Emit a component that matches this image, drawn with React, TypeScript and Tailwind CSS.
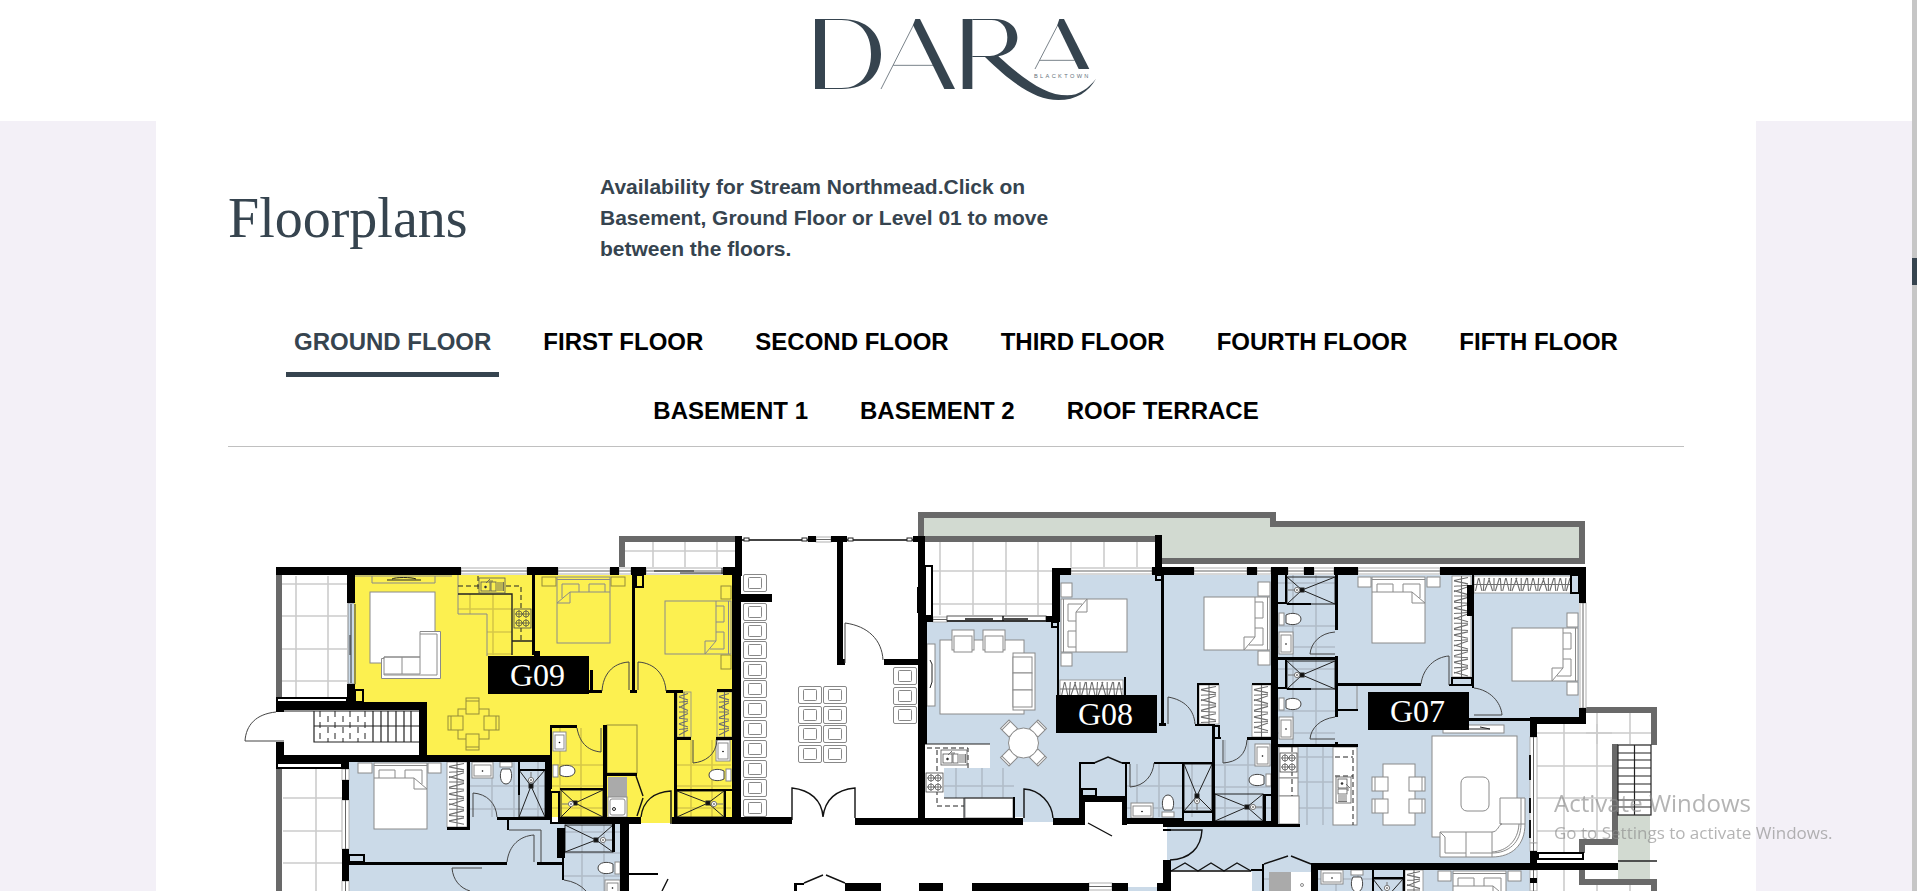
import React, { useState } from "react";

type Box = [x: number, y: number, w: number, h: number];

const FLOORS = [
  "GROUND FLOOR",
  "FIRST FLOOR",
  "SECOND FLOOR",
  "THIRD FLOOR",
  "FOURTH FLOOR",
  "FIFTH FLOOR",
  "BASEMENT 1",
  "BASEMENT 2",
  "ROOF TERRACE",
];

const LINE = "#8a8a8a";
const INK = "#222222";
const YELLOW = "#fcf050";
const BLUE = "#cbdae8";
const GREY = "#696969";
const GREEN = "#d2dad1";

/* ---------- Logo ---------- */

function Logo() {
  return (
    <svg viewBox="96 45 864 264" className="block w-72" role="img" aria-label="Dara Blacktown">
      <g fill="#36444f">
        <rect x="105" y="57" width="30" height="210" />
        <path d="M135 57H185C260 57 303 100 303 162C303 225 260 267 185 267H135V264H185C240 264 273 225 273 162C273 97 238 60 185 60H135Z" />
        <path d="M406 57H420L525 267H493L399 75Z" />
        <rect x="548" y="57" width="29" height="210" />
        <path d="M577 57H640C685 57 712 80 712 112C712 143 690 162 655 169C740 245 800 286 862 286C897 286 926 264 948 236C926 276 888 300 835 300C768 300 700 254 615 171H577V168H630C664 166 682 145 682 112C682 78 660 60 635 60H577Z" />
        <path d="M838 57H852L928 207H896L832 75Z" />
      </g>
      <g stroke="#36444f" strokeWidth="2" fill="none">
        <path d="M401 74L303 267M340 196H462M834 74L765 207M779 181H884" />
      </g>
      <text x="762" y="233" fontSize="17" fill="#64707a" className="font-['Liberation_Sans'] tracking-[7px]">
        BLACKTOWN
      </text>
    </svg>
  );
}

/* ---------- Floor plan symbols ---------- */

function Rects({ boxes, fill, stroke, weight }: { boxes: Box[]; fill: string; stroke?: string; weight?: number }) {
  return (
    <g fill={fill} stroke={stroke} strokeWidth={weight}>
      {boxes.map(([x, y, w, h]) => (
        <rect key={`${x}-${y}-${w}`} x={x} y={y} width={w} height={h} />
      ))}
    </g>
  );
}

/** Grid of paving joints clipped to a box. */
function Tiles({ box: [x, y, w, h], xs, ys, color = "#cccccc" }: { box: Box; xs: number[]; ys: number[]; color?: string }) {
  return (
    <path
      d={xs.map((v) => `M${v} ${y}v${h}`).join("") + ys.map((v) => `M${x} ${v}h${w}`).join("")}
      stroke={color}
      strokeWidth="1.6"
      fill="none"
    />
  );
}

/** Bed drawn 53 wide by 66 long with the pillows at the top, then turned about its corner. */
function Bed({ x, y, turn = 0, flip = false, fill = "#ffffff" }: { x: number; y: number; turn?: number; flip?: boolean; fill?: string }) {
  return (
    <g transform={`translate(${x} ${y}) rotate(${turn}) ${flip ? "translate(53 0) scale(-1 1)" : ""}`} fill={fill} stroke={LINE}>
      <rect width="53" height="66" />
      <path d="M0 2.500H53M0 15H40L53 26M40 15V26H53M5 15V7H21V15M31 15V7H48V21" fill="none" />
    </g>
  );
}

/** Hanging rail with coat hangers. */
function Wardrobe({ box: [x, y, w, h], fill = "#ffffff" }: { box: Box; fill?: string }) {
  const tall = h > w;
  const len = tall ? h : w;
  const deep = tall ? w : h;
  const tilt = [1.5, -1.5, 0.5, 2.5, -2, 0, 2, -0.5];
  let d = "";
  for (let i = 3, k = 0; i < len - 2; i += 3.4, k++) {
    const t = tilt[k % 8];
    const a = Math.min(len - 1, Math.max(1, i + t));
    const b = Math.min(len - 1, Math.max(1, i - t));
    d += tall ? `M${x + 2} ${y + a}L${x + deep - 3} ${y + b}` : `M${x + a} ${y + 2}L${x + b} ${y + deep - 2}`;
  }
  d += tall ? `M${x + deep / 2} ${y}v${len}` : `M${x} ${y + deep / 2}h${len}`;
  return (
    <g>
      <rect x={x} y={y} width={w} height={h} fill={fill} stroke={LINE} strokeWidth="0.800" />
      <path d={d} stroke="#6f6f6f" strokeWidth="1.100" fill="none" />
    </g>
  );
}

function Shower({ box: [x, y, w, h], hx, hy }: { box: Box; hx: number; hy: number }) {
  return (
    <g stroke={INK} fill="none">
      <rect x={x} y={y} width={w} height={h} />
      <path d={`M${x} ${y}L${hx} ${hy}L${x + w} ${y}M${x} ${y + h}L${hx} ${hy}L${x + w} ${y + h}`} />
      <rect x={hx - 2} y={hy - 2} width="4" height="4" fill="#111111" />
    </g>
  );
}

function Nozzle({ x, y, dx = 0, dy = 0 }: { x: number; y: number; dx?: number; dy?: number }) {
  return (
    <g stroke="#777777" fill="#ffffff">
      <path d={`M${x} ${y}l${dx} ${dy}`} />
      <circle cx={x} cy={y} r="2.600" />
      <circle cx={x} cy={y} r="0.500" fill="#000000" />
    </g>
  );
}

/** Toilet: cistern at the origin, pan pointing right before turning. */
function Toilet({ x, y, turn = 0 }: { x: number; y: number; turn?: number }) {
  return (
    <g transform={`translate(${x} ${y}) rotate(${turn})`} stroke="#888888" fill="#ffffff">
      <rect x="0" y="-6" width="5" height="12" />
      <path d="M7 -4C12 -7 22 -6 22 0C22 6 12 7 7 4Z" stroke="#444444" />
    </g>
  );
}

function Basin({ box: [x, y, w, h] }: { box: Box }) {
  return (
    <g stroke={LINE} fill="#ffffff">
      <rect x={x} y={y} width={w} height={h} />
      <rect x={x + 2} y={y + 3} width={w - 4} height={h - 5} />
      <circle cx={x + w / 2} cy={y + h / 2 + 1} r="0.800" fill="#000000" stroke="none" />
    </g>
  );
}

function Hob({ x, y, fill = "#ffffff" }: { x: number; y: number; fill?: string }) {
  return (
    <g stroke="#444444" fill={fill}>
      <rect x={x} y={y} width="17" height="19" strokeWidth="0.800" />
      {[5, 12].map((cx) =>
        [5, 14].map((cy) => (
          <g key={`${cx}-${cy}`} strokeWidth="0.700">
            <circle cx={x + cx} cy={y + cy} r="3" />
            <path d={`M${x + cx - 4} ${y + cy}h8M${x + cx} ${y + cy - 4}v8`} />
          </g>
        )),
      )}
    </g>
  );
}

function Sink({ x, y, turn = 0, fill = "#ffffff" }: { x: number; y: number; turn?: number; fill?: string }) {
  return (
    <g transform={`translate(${x} ${y}) rotate(${turn})`} stroke="#555555" strokeWidth="0.800" fill={fill}>
      <rect width="26" height="15" />
      <rect x="2" y="4" width="9" height="9" />
      <rect x="12" y="4" width="5" height="9" />
      <path d="M19 4V13M21 4V13M23 4V13M24.500 4V13M7 5L11 1M10 3H14" />
      <circle cx="6.500" cy="9" r="1" fill="#000000" />
    </g>
  );
}

function LobbySeat({ x, y }: { x: number; y: number }) {
  return (
    <g transform="translate(0.500 0.500)" stroke="#888888" fill="#ffffff">
      <rect x={x} y={y} width="23" height="17" rx="1.500" />
      <rect x={x + 5} y={y + 3} width="13" height="11" rx="1" />
    </g>
  );
}

/** Glazing between two wall ends. */
function Windows({ boxes }: { boxes: Box[] }) {
  return (
    <g>
      {boxes.map(([x, y, w, h]) => (
        <g key={`${x}-${y}`} stroke="#666666" fill="#ffffff">
          <rect x={x} y={y} width={w} height={h} stroke="#b0b0b0" />
          <path d={w > h ? `M${x} ${y + h / 2}h${w}` : `M${x + w / 2} ${y}v${h}`} />
        </g>
      ))}
    </g>
  );
}

function UnitLabel({ x, y, w = 101, name }: { x: number; y: number; w?: number; name: string }) {
  return (
    <a href={`#${name}`}>
      <rect x={x} y={y} width={w} height="38" fill="#000000" />
      <text x={x + w / 2 - 1} y={y + 30} textAnchor="middle" fontSize="32" fill="#ffffff" className="font-['Liberation_Serif',serif]">
        {name}
      </text>
    </a>
  );
}

/* ---------- Floor plan data ---------- */

const GLAZING: Box[] = [
  [461, 568, 66, 6], [558, 568, 52, 6], [619, 568, 12, 6], [646, 568, 77, 6],
  [342, 769, 7, 11], [342, 800, 7, 49], [342, 881, 7, 12],
  [1071, 568, 81, 6], [1194, 568, 53, 6], [1257, 568, 14, 6], [1288, 568, 16, 6],
  [1314, 568, 20, 6], [1358, 568, 82, 6], [1580, 603, 6, 105], [933, 617, 14, 5],
  [1530, 737, 7, 106], [1530, 843, 7, 8], [1530, 870, 7, 21], [816, 537, 15, 5], [1089, 883, 23, 7],
];

const WALLS: Box[] = [
  // G09 perimeter
  [276, 567, 185, 8], [527, 567, 31, 8], [610, 567, 9, 8], [631, 567, 15, 8], [723, 567, 18, 8],
  [347, 567, 8, 36], [347, 684, 8, 20], [276, 702, 151, 8], [419, 702, 8, 60], [276, 755, 275, 7],
  [276, 702, 8, 10], [276, 742, 8, 20], [735, 536, 7, 40], [732, 567, 9, 257],
  // G09 partitions
  [532, 575, 3, 80], [534, 651, 6, 6], [632, 575, 3, 117], [590, 670, 3, 22], [580, 690, 22, 3],
  [630, 690, 7, 3], [666, 690, 17, 3], [674, 690, 3, 128], [717, 689, 15, 3], [676, 737, 15, 3],
  [716, 737, 16, 3], [550, 725, 27, 3], [550, 725, 2, 64], [603, 725, 4, 93], [607, 773, 30, 3],
  [560, 788, 44, 2], [677, 789, 55, 2], [724, 790, 2, 28], [560, 817, 81, 7], [672, 817, 120, 7],
  // South-west unit
  [545, 762, 6, 58], [467, 762, 3, 68], [447, 827, 22, 3], [497, 817, 53, 3], [507, 817, 2, 13],
  [349, 862, 158, 3], [537, 862, 26, 3], [342, 762, 7, 7], [342, 780, 7, 20], [342, 849, 7, 32],
  [557, 828, 8, 30], [562, 850, 2, 30], [612, 824, 3, 28], [620, 817, 9, 74], [518, 762, 2, 33],
  [520, 769, 26, 2], [629, 873, 29, 2],
  // Lobby
  [808, 536, 8, 6], [831, 536, 16, 6], [837, 536, 6, 129], [837, 659, 8, 6], [741, 594, 31, 8],
  [913, 536, 6, 6], [884, 659, 34, 6], [918, 536, 7, 288], [917, 587, 9, 26], [918, 617, 9, 127],
  [855, 818, 168, 7], [845, 883, 36, 8], [919, 883, 24, 8], [972, 883, 117, 8], [1112, 883, 16, 8],
  [794, 883, 3, 8], [794, 883, 10, 2],
  // G08
  [1052, 568, 8, 54], [1052, 568, 19, 7], [925, 616, 8, 6], [1046, 616, 12, 6],
  [1057, 622, 2, 73], [1124, 677, 2, 19], [1155, 535, 7, 40], [1152, 567, 42, 8], [1247, 567, 10, 8],
  [1161, 575, 3, 150], [1159, 723, 7, 3], [1197, 683, 2, 42], [1197, 683, 22, 2], [1252, 683, 19, 2],
  [1195, 724, 18, 2], [1212, 724, 3, 100], [1213, 737, 8, 2], [1247, 737, 24, 3], [1154, 762, 59, 2],
  [1182, 764, 2, 60], [1184, 811, 30, 2], [1263, 794, 3, 28], [1263, 794, 8, 2], [1271, 567, 7, 258],
  [1079, 762, 2, 60], [1079, 762, 16, 2], [1122, 762, 8, 2], [1125, 764, 2, 60], [1080, 796, 46, 6],
  [1079, 797, 6, 28], [1122, 797, 5, 28], [1053, 818, 32, 7], [1122, 818, 62, 6], [1163, 821, 115, 6],
  [1013, 797, 2, 22],
  // G07
  [1278, 567, 10, 8], [1304, 567, 10, 8], [1334, 567, 24, 8], [1440, 567, 146, 8], [1579, 567, 7, 36],
  [1579, 708, 7, 16], [1530, 717, 56, 7], [1530, 717, 7, 20], [1285, 575, 2, 28], [1335, 575, 3, 55],
  [1278, 602, 9, 2], [1287, 603, 24, 2], [1278, 657, 59, 3], [1335, 656, 3, 61], [1285, 660, 2, 28],
  [1278, 687, 9, 2], [1287, 688, 24, 2], [1335, 742, 3, 4], [1278, 744, 80, 3], [1338, 709, 20, 2],
  [1338, 683, 83, 3], [1449, 684, 24, 2], [1472, 575, 2, 113], [1467, 585, 7, 31], [1469, 718, 61, 3],
  [1278, 824, 22, 3], [1311, 863, 307, 7], [1530, 851, 7, 19], [1530, 878, 7, 5],
  [1163, 829, 8, 2], [1163, 860, 8, 31], [1157, 883, 7, 8], [1311, 863, 7, 28], [1262, 864, 2, 27],
  [1372, 870, 2, 21], [1403, 870, 2, 21], [1374, 877, 30, 2], [1251, 869, 12, 2],
];

const OUTLINED: Box[] = [
  [277, 698, 70, 4], [277, 763, 65, 5], [355, 690, 8, 12], [349, 855, 15, 7], [636, 575, 7, 12],
  [551, 792, 8, 31], [925, 566, 7, 50], [1052, 622, 6, 5], [1156, 575, 6, 5], [1214, 726, 5, 12],
  [1082, 789, 14, 7], [1452, 678, 20, 7], [1571, 575, 8, 18], [1538, 853, 45, 6],
];

const SEAT_ROWS = [574, 603, 622, 641, 661, 680, 700, 720, 740, 760, 779, 799];

/* ---------- Floor plan ---------- */

function FloorPlan() {
  return (
    <svg viewBox="228 495 1456 396" className="block w-full" role="img" aria-label="Ground floor plan">
      {/* Room and garden fills */}
      <path d="M355 575H732V817H672V823H641V817H551V755H427V702H355Z" fill={YELLOW} />
      <path d="M349 762H550V824H620V891H349Z" fill={BLUE} />
      <path d="M927 622H1057V575H1271V822H1053V822H1023V817H927Z" fill={BLUE} />
      <path d="M1278 575H1579V717H1530V891H1252V872H1171V860H1167V826H1278Z" fill={BLUE} />
      <rect x="1127" y="887" width="36" height="4" fill={BLUE} />
      <path d="M924 518H1271V527H1579V559H1162V536H924Z" fill={GREEN} />
      <rect x="1618" y="815" width="32" height="64" fill={GREEN} />

      {/* Paving */}
      <Tiles box={[282, 576, 65, 121]} xs={[296, 328]} ys={[584, 616, 649, 681]} />
      <Tiles box={[283, 768, 59, 123]} xs={[316]} ys={[798, 831, 863]} />
      <Tiles box={[625, 542, 110, 25]} xs={[653, 685, 717]} ys={[551]} />
      <Tiles box={[932, 542, 120, 73]} xs={[940, 973, 1006, 1038]} ys={[571, 604]} />
      <Tiles box={[1060, 542, 95, 25]} xs={[1071, 1104, 1137]} ys={[]} />
      <Tiles box={[1537, 724, 75, 128]} xs={[1564, 1597]} ys={[733, 766, 798, 831]} />
      <Tiles box={[1586, 713, 65, 31]} xs={[1597, 1630]} ys={[733]} />
      <Tiles box={[1537, 870, 42, 21]} xs={[1564]} ys={[]} />
      <Tiles box={[1579, 885, 72, 6]} xs={[1597, 1630]} ys={[]} />
      <rect x="1585" y="845" width="33" height="18" fill="#ffffff" />

      {/* Wet-area and kitchen floors */}
      <g>
        <Tiles box={[552, 728, 51, 89]} xs={[560, 581]} ys={[765, 786, 808]} color="#d6c848" />
        <Tiles box={[677, 740, 54, 77]} xs={[691, 712]} ys={[765, 786, 808]} color="#d6c848" />
        <Tiles box={[458, 594, 54, 20]} xs={[470, 493]} ys={[609]} color="#d6c848" />
        <Tiles box={[487, 614, 25, 41]} xs={[493]} ys={[632, 654]} color="#d6c848" />
        <Tiles box={[470, 762, 75, 55]} xs={[492, 514, 538]} ys={[786, 809]} color="#b1bcc8" />
        <Tiles box={[564, 825, 56, 66]} xs={[582, 604]} ys={[832, 853, 876]} color="#b1bcc8" />
        <Tiles box={[944, 768, 70, 30]} xs={[956, 982, 1003]} ys={[786]} color="#b1bcc8" />
        <Tiles box={[1127, 764, 85, 53]} xs={[1137, 1159, 1192]} ys={[786, 808]} color="#b1bcc8" />
        <Tiles box={[1215, 740, 56, 81]} xs={[1225, 1248]} ys={[765, 787, 808]} color="#b1bcc8" />
        <Tiles box={[1278, 575, 57, 169]} xs={[1293, 1316]} ys={[583, 626, 647, 669, 711, 733]} color="#b1bcc8" />
        <Tiles box={[1298, 747, 35, 78]} xs={[1307, 1323]} ys={[757, 782, 808]} color="#b1bcc8" />
        <Tiles box={[1264, 872, 140, 19]} xs={[1277, 1336, 1358]} ys={[879]} color="#b1bcc8" />
      </g>

      {/* Parapets */}
      <g fill="none" stroke={GREY} strokeWidth="6">
        <path d="M279 575V697M279 768V891M622 567V539H735" />
        <path d="M921 542V515H1273V524H1582V561H1162M924 539H1155" />
        <path d="M1586 710H1654V745M1615 744V842H1582V853M1582 867V882H1654V891" />
      </g>
      <path d="M1618 861H1657" stroke={INK} strokeWidth="1.400" />

      {/* G09 furniture */}
      <g fill={YELLOW} stroke={LINE}>
        <path d="M355 576H452M372 576V583H435V576M458 575V594M458 594V614H487V656" fill="none" />
        <path d="M387 580H421M392 579C395 577 412 577 416 579" fill="none" stroke={INK} />
        <rect x="370" y="592" width="65" height="71" fill="#ffffff" />
        <path d="M420 631.500H440.500V678.500H381.500V658.500H384V657H420Z" fill="#ffffff" />
        <path d="M384 657H420M420 634H437V675H384V657M402 657V674M420 657V674M384 674H420" fill="none" />
        <g stroke="#948c38">
          <rect x="458" y="709" width="31" height="30" />
          <rect x="466" y="698" width="13" height="16" />
          <rect x="466" y="734" width="13" height="16" />
          <rect x="448" y="716" width="15" height="14" />
          <rect x="484" y="716" width="15" height="14" />
          <path d="M466 701H479M466 747H479M451 716V730M496 716V730" />
          <rect x="542" y="577" width="14" height="9" />
          <rect x="611" y="577" width="14" height="9" />
          <rect x="721" y="586" width="10" height="13" />
          <rect x="721" y="655" width="10" height="14" />
          <rect x="607" y="725" width="30" height="48" />
        </g>
        <path d="M458 594H512V655M512 641H532" stroke={INK} strokeWidth="1.400" fill="none" />
        <path d="M458 586H521V640M478 576V592" stroke={INK} strokeDasharray="5 3" fill="none" />
      </g>
      <Sink x={479} y={578} fill={YELLOW} />
      <Hob x={514} y={609} fill={YELLOW} />
      <Bed x={557} y={577} flip fill={YELLOW} />
      <Bed x={731} y={601} turn={90} fill={YELLOW} />
      <Wardrobe box={[677, 692, 14, 45]} fill={YELLOW} />
      <Wardrobe box={[717, 692, 15, 45]} fill={YELLOW} />
      <Basin box={[553, 732, 13, 19]} />
      <Toilet x={553} y={771} />
      <Shower box={[561, 790, 42, 27]} hx={575} hy={803} />
      <Nozzle x={571} y={804} dx={-9} />
      <Basin box={[716, 740, 14, 21]} />
      <Toilet x={731} y={775} turn={180} />
      <Shower box={[677, 791, 47, 26]} hx={708} hy={803} />
      <Nozzle x={714} y={804} dx={9} />
      <rect x="608" y="777" width="19" height="20" fill="#aaaaaa" />
      <rect x="608" y="797" width="19" height="20" fill="#ffffff" stroke={LINE} />
      <rect x="610" y="799" width="15" height="16" rx="2" fill="none" stroke={LINE} />
      <circle cx="614" cy="809" r="1.500" fill="none" stroke={INK} />

      {/* Fire stair */}
      <g stroke={INK} fill="none" strokeWidth="1.200">
        <path d="M284 711H419M314 711V742H419M314 726H419M373 711V742M381 711V742M388 711V742M396 711V742M404 711V742M411 711V742" />
        <path d="M320 711V742M328 716V742M335 711V742M343 716V742M350 711V742M358 716V742M365 711V742" strokeDasharray="6 5" strokeWidth="1" />
      </g>

      {/* South-west unit furniture */}
      <Bed x={374} y={763} />
      <Rects fill="#ffffff" stroke={LINE} boxes={[[358, 763, 14, 10], [428, 763, 13, 10]]} />
      <Wardrobe box={[447, 762, 20, 65]} />
      <Basin box={[472, 762, 21, 16]} />
      <Toilet x={506} y={762} turn={90} />
      <Shower box={[519, 770, 26, 47]} hx={531} hy={786} />
      <Nozzle x={531} y={780} dy={-8} />
      <Shower box={[565, 825, 48, 27]} hx={596} hy={840} />
      <Nozzle x={603} y={840} dx={9} />
      <Toilet x={620} y={868} turn={180} />
      <Basin box={[605, 880, 15, 14]} />

      {/* Lobby seating */}
      {SEAT_ROWS.map((y) => (
        <LobbySeat key={y} x={743} y={y} />
      ))}
      {[686, 706, 725, 745].map((y) => (
        <g key={y}>
          <LobbySeat x={798} y={y} />
          <LobbySeat x={823} y={y} />
        </g>
      ))}
      {[667, 687, 706].map((y) => (
        <LobbySeat key={y} x={893} y={y} />
      ))}

      {/* G08 furniture */}
      <Rects
        fill="#ffffff"
        stroke={LINE}
        boxes={[
          [927, 644, 8, 62], [940, 640, 84, 74], [952, 630, 22, 20], [954, 636, 18, 16], [983, 630, 22, 20],
          [985, 636, 18, 16], [1013, 653, 22, 57], [1013, 657, 19, 16], [1013, 673, 19, 17], [1013, 690, 19, 17],
          [1061, 583, 11, 14], [1061, 653, 11, 13], [1258, 582, 12, 14], [1258, 651, 12, 14],
        ]}
      />
      <path d="M930 688L932 682V664L930 660" fill="none" stroke={INK} />
      <g fill="#ffffff" stroke={LINE}>
        {[45, 135, 225, 315].map((angle) => (
          <g key={angle} transform={`rotate(${angle} 1023.500 743)`}>
            <rect x="1038" y="737" width="12" height="12" />
            <path d="M1048 737V749" />
          </g>
        ))}
        <circle cx="1023.500" cy="743" r="15" />
      </g>
      <path d="M925 744H990V768H944V798H964V818H925Z" fill="#ffffff" />
      <rect x="965" y="798" width="48" height="20" fill="#ffffff" stroke={LINE} />
      <path d="M925 744H990M944 798H1014M964 798V818" stroke={INK} fill="none" />
      <path d="M927 748H968V768M937 750V806H964" stroke={INK} strokeDasharray="5 3" fill="none" />
      <Sink x={941} y={750} />
      <Hob x={926} y={773} />
      <Bed x={1061} y={652} turn={270} />
      <Bed x={1270} y={597} turn={90} />
      <Wardrobe box={[1060, 680, 63, 18]} />
      <Wardrobe box={[1199, 685, 20, 39]} />
      <Wardrobe box={[1252, 685, 19, 52]} />
      <rect x="1085" y="802" width="37" height="20" fill="#ffffff" />
      <Basin box={[1131, 803, 22, 15]} />
      <Toilet x={1168} y={817} turn={270} />
      <Shower box={[1184, 764, 28, 47]} hx={1197} hy={796} />
      <Nozzle x={1197} y={801} dy={9} />
      <Basin box={[1255, 744, 15, 22]} />
      <Toilet x={1271} y={780} turn={180} />
      <Shower box={[1215, 794, 48, 27]} hx={1247} hy={807} />
      <Nozzle x={1253} y={807} dx={9} />

      {/* G07 furniture */}
      <Shower box={[1287, 577, 48, 27]} hx={1302} hy={590} />
      <Nozzle x={1297} y={590} dx={-9} />
      <Toilet x={1279} y={619} />
      <Basin box={[1279, 632, 14, 22]} />
      <Shower box={[1287, 661, 48, 28]} hx={1302} hy={675} />
      <Nozzle x={1297} y={675} dx={-9} />
      <Toilet x={1279} y={704} />
      <Basin box={[1279, 717, 14, 22]} />
      <Bed x={1372} y={577} />
      <Bed x={1578} y={628} turn={90} />
      <Wardrobe box={[1452, 576, 19, 101]} />
      <Wardrobe box={[1474, 576, 97, 17]} />
      <Rects
        fill="#ffffff"
        stroke={LINE}
        boxes={[
          [1358, 577, 13, 10], [1427, 577, 13, 10], [1567, 613, 11, 14], [1567, 682, 11, 13],
          [1279, 747, 19, 31], [1279, 778, 19, 18], [1279, 796, 20, 28], [1333, 747, 24, 78],
          [1383, 764, 32, 61], [1443, 725, 61, 8], [1432, 736, 85, 101],
          [1372, 777, 16, 14], [1409, 777, 16, 14], [1372, 799, 16, 14], [1409, 799, 16, 14],
        ]}
      />
      <path d="M1375 777V791M1422 777V791M1375 799V813M1422 799V813M1338 685H1357V709" stroke={LINE} fill="none" />
      <path d="M1353 750V825M1335 757H1353M1335 776H1353M1292 747V796" stroke={INK} strokeDasharray="5 3" fill="none" />
      <Hob x={1280} y={753} />
      <Sink x={1351} y={777} turn={90} />
      <g fill="#ffffff" stroke={LINE}>
        <rect x="1461" y="777" width="28" height="34" rx="6" />
        <path d="M1440 832H1492C1498 832 1499 824 1502 824H1500V798H1525V824C1525 845 1512 857 1492 857H1440Z" />
        <path d="M1440 832L1445 837V853H1466M1466 832V857M1492 832V857M1470 853H1492C1508 853 1521 843 1521 824V798M1500 824H1525M1492 852C1507 851 1518 841 1519 824" fill="none" />
        <path d="M1458 729H1490L1480 727" fill="none" stroke={INK} />
      </g>

      {/* Lower units */}
      <rect x="1171" y="872" width="80" height="19" fill="#ffffff" />
      <rect x="1269" y="872" width="22" height="19" fill="#aaaaaa" />
      <rect x="1291" y="872" width="20" height="19" fill="#ffffff" />
      <circle cx="1302" cy="885" r="1.500" fill="none" stroke={LINE} />
      <Basin box={[1321, 870, 22, 14]} />
      <Toilet x={1357} y={870} turn={90} />
      <Shower box={[1373, 879, 30, 27]} hx={1387} hy={897} />
      <Nozzle x={1387} y={888} dy={-6} />
      <Wardrobe box={[1405, 870, 18, 30]} />
      <Bed x={1453} y={871} />
      <Rects fill="#ffffff" stroke={LINE} boxes={[[1438, 871, 13, 10], [1508, 871, 13, 10]]} />

      {/* External stair */}
      <g stroke={INK} fill="#ffffff" strokeWidth="1.200">
        <rect x="1618" y="745" width="33" height="70" />
        <path d="M1634.500 745V815M1618 753H1651M1618 760H1651M1618 768H1651M1618 776H1651M1618 784H1651M1618 792H1651M1618 800H1651M1618 807H1651" />
      </g>

      {/* Glazing and sliding doors */}
      <Windows boxes={GLAZING} />
      <rect x="348" y="603" width="7" height="81" fill={BLUE} stroke={LINE} />
      <rect x="354" y="603" width="2" height="81" fill={YELLOW} />
      <path d="M351 604V683M355 604V684M350 635V655" stroke="#333333" fill="none" />
      <path d="M654 571H694M680 573H723M722 568V574" stroke="#222222" fill="none" />
      <rect x="947" y="616" width="99" height="5" fill="#ffffff" stroke="#555555" />
      <path d="M947 621H1046M965 619H993M1004 619H1028M1003 616V621" stroke="#111111" strokeWidth="1.500" fill="none" />
      <path d="M1530 755V765M1530 765V780M1530 798V813M1530 820V838" stroke="#111111" strokeWidth="2" />

      <Rects boxes={OUTLINED} fill="none" stroke="#000000" weight={2} />
      <g shapeRendering="crispEdges">
        <Rects boxes={WALLS} fill="#000000" />
      </g>

      {/* Door leaves and swings */}
      <g fill="none" stroke="#444444">
        <path d="M276 712C256 714 246 725 245 741H284" />
        <path d="M602 691C603 675 612 663 629 662V690M638 690V662C655 663 665 675 666 691" />
        <path d="M577 728C580 745 590 751 601 752V728M693 740V763C705 762 716 755 717 740" />
        <path d="M473 817V793C487 794 496 803 497 817M509 830H541V862M507 862C509 845 520 836 534 835V862M482 868H452C453 880 460 888 470 891" />
        <path d="M564 880Q578 882 586 891M845 663V623C868 626 882 640 883 660" />
        <path d="M1130 787C1145 786 1153 775 1154 763M1130 764V787M1168 724V697C1185 700 1194 710 1195 724" />
        <path d="M1223 740V763C1237 762 1246 755 1247 740M1335 632C1320 633 1311 643 1310 654H1335M1335 717C1320 719 1311 728 1310 739H1335" />
        <path d="M1421 684C1423 668 1435 657 1449 656V685M1474 688C1490 690 1501 702 1502 715H1474" />
        <path d="M742 540H808M847 540H913M1171 871H1251" strokeWidth="2" />
      </g>
      <g fill="#ffffff" stroke="#222222">
        <rect x="744" y="538" width="5" height="3" />
        <rect x="802" y="538" width="5" height="3" />
        <rect x="848" y="538" width="5" height="3" />
        <rect x="907" y="538" width="5" height="3" />
      </g>
      <g fill="none" stroke="#111111" strokeWidth="1.400">
        <path d="M641 817C643 800 655 792 671 791V824M792 820V788C810 790 822 800 823 817C825 800 835 790 855 788V818" />
        <path d="M1024 818V789C1040 790 1052 803 1053 818M1171 830H1202C1201 848 1190 859 1170 860" />
        <path d="M636 776L643 796M643 798L637 816M668 879L662 891M804 883L823 875M826 875L845 883M1094 763L1108 757L1122 763M1088 823L1112 836" />
        <path d="M1171 871L1185 863L1198 871L1211 863L1224 871L1237 863L1251 871M1264 864L1288 856M1291 856L1311 864" />
      </g>

      <UnitLabel x={488} y={656} name="G09" />
      <UnitLabel x={1056} y={695} name="G08" />
      <UnitLabel x={1368} y={692} name="G07" />
    </svg>
  );
}

/* ---------- Page ---------- */

export default function App() {
  const [active, setActive] = useState(FLOORS[0]);

  return (
    <div className="flex min-h-screen bg-[#f3f0f7] font-['Liberation_Sans',Arial,sans-serif] text-[#36444f]">
      <div className="flex min-w-0 flex-1 flex-col">
        <header className="flex justify-center bg-white pt-[15px] pb-[18px]">
          <a href="#home">
            <Logo />
          </a>
        </header>

        <main className="mx-auto w-full max-w-[1600px] flex-1 bg-white px-[72px] pt-[50px]">
          <div className="flex items-center">
            <h1 className="w-[372px] font-['Liberation_Serif',serif] text-[56px] leading-[56px]">Floorplans</h1>
            <p className="max-w-[480px] text-[21px] leading-[31px] font-bold">
              Availability for Stream Northmead.Click on Basement, Ground Floor or Level 01 to move between the floors.
            </p>
          </div>

          <nav className="mt-[59px] flex flex-wrap justify-center gap-x-9 gap-y-[15px] border-b border-[#c0c0c0]">
            {FLOORS.map((floor) => (
              <button
                key={floor}
                type="button"
                onClick={() => setActive(floor)}
                className={
                  floor === active
                    ? "border-b-[5px] border-[#36444f] px-2 pt-px pb-3 text-2xl leading-9 font-bold text-[#36444f]"
                    : "border-b-[5px] border-transparent px-2 pt-px pb-3 text-2xl leading-9 font-bold text-black"
                }
              >
                {floor}
              </button>
            ))}
          </nav>

          <div className="pt-12">
            <FloorPlan />
          </div>
        </main>
      </div>

      <div className="w-[5px] bg-[#c6c6c6] pt-[258px]" aria-hidden="true">
        <div className="h-[27px] bg-[#36444f]" />
      </div>

      <div className="pointer-events-none fixed right-[79px] bottom-[44px] w-[284px] font-['Open_Sans','Noto_Sans',sans-serif] whitespace-nowrap text-[#8c8c8c]/65">
        <p className="text-2xl leading-8">Activate Windows</p>
        <p className="text-[17px] leading-7">Go to Settings to activate Windows.</p>
      </div>
    </div>
  );
}
